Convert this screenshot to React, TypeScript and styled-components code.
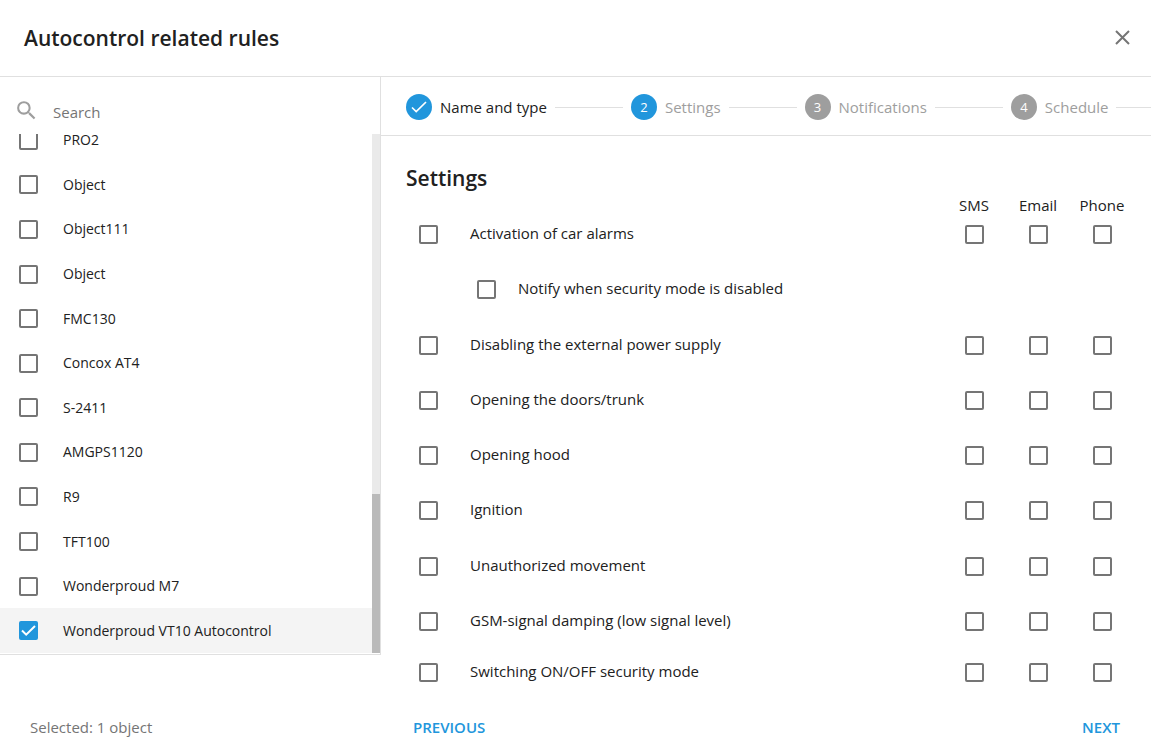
import React, { useState } from "react";
import styled, { createGlobalStyle } from "styled-components";

const GlobalStyle = createGlobalStyle`
  * { box-sizing: border-box; }
  body {
    margin: 0;
    background: #fff;
    color: #212121;
    font-family: "Open Sans", "Noto Sans", sans-serif;
    font-size: 15px;
    line-height: 20px;
  }
  button, input { font: inherit; color: inherit; }
`;

const Dialog = styled.section`
  display: flex;
  flex-direction: column;
  min-height: 100vh;
`;

const Header = styled.header`
  display: flex;
  align-items: center;
  justify-content: space-between;
  height: 77px;
  padding: 0 16px 0 24px;
  border-bottom: 1px solid #e0e0e0;
`;

const Title = styled.h1`
  margin: 0;
  font-size: 21px;
  line-height: 28px;
  font-weight: 600;
`;

const CloseButton = styled.button`
  display: flex;
  padding: 0;
  border: 0;
  background: none;
  color: #757575;
  cursor: pointer;
`;

const Body = styled.div`
  display: flex;
  flex: 1;
`;

const Sidebar = styled.aside`
  display: flex;
  flex-direction: column;
  flex: 0 0 381px;
`;

const SidebarPanel = styled.div`
  border-right: 1px solid #e0e0e0;
  border-bottom: 1px solid #e0e0e0;
  padding-bottom: 1px;
`;

const SearchBar = styled.label`
  display: flex;
  align-items: center;
  gap: 14px;
  height: 57px;
  padding: 10px 14px 0;
  color: #9e9e9e;
`;

const SearchInput = styled.input`
  flex: 1;
  min-width: 0;
  padding: 2px 0 0;
  border: 0;
  outline: 0;
  background: none;
  color: #212121;
  &::placeholder { color: #757575; opacity: 1; }
`;

const ListViewport = styled.div`
  display: flex;
  align-items: flex-end;
  height: 519px;
  overflow: hidden;
`;

const ObjectList = styled.ul`
  flex: 1;
  display: grid;
  grid-template-rows: repeat(12, 1fr);
  height: 535px;
  margin: 0;
  padding: 0;
  list-style: none;
`;

const ObjectItem = styled.li<{ $selected: boolean }>`
  background: ${(p) => (p.$selected ? "#f4f4f4" : "transparent")};
`;

const ObjectLabel = styled.label`
  display: flex;
  align-items: center;
  gap: 25px;
  height: 100%;
  padding-left: 19px;
  font-size: 14px;
  cursor: pointer;
`;

const ScrollTrack = styled.div`
  display: flex;
  align-items: flex-end;
  width: 8px;
  height: 100%;
  background: #eaeaea;
`;

const ScrollThumb = styled.div`
  width: 100%;
  height: 159px;
  background: #bababa;
`;

const Tick = styled.input.attrs({ type: "checkbox" })`
  appearance: none;
  flex: none;
  display: block;
  width: 19px;
  height: 19px;
  margin: 0;
  border: 2px solid #757575;
  border-radius: 2px;
  cursor: pointer;
  &:checked {
    border-color: #2196dc;
    background: #2196dc
      url("data:image/svg+xml,%3Csvg xmlns='http://www.w3.org/2000/svg' viewBox='0 0 15 15'%3E%3Cpath d='M1 7.5l4.2 4.2L14 3' fill='none' stroke='white' stroke-width='2'/%3E%3C/svg%3E")
      center / 15px 15px no-repeat;
  }
`;

const Selected = styled.p`
  margin: 0;
  padding: 62px 30px 0;
  color: #757575;
`;

const Main = styled.main`
  display: flex;
  flex-direction: column;
  flex: 1;
  min-width: 0;
`;

const Stepper = styled.ol`
  display: flex;
  align-items: center;
  height: 59px;
  margin: 0;
  padding: 2px 0 0 25px;
  border-bottom: 1px solid #e0e0e0;
  list-style: none;
  overflow: hidden;
`;

const Step = styled.li<{ $done?: boolean }>`
  display: flex;
  align-items: center;
  flex: none;
  gap: 8px;
  margin-right: 8px;
  color: ${(p) => (p.$done ? "#212121" : "#9e9e9e")};
  &::after {
    content: "";
    width: 68px;
    height: 1px;
    background: #e0e0e0;
  }
`;

const StepBadge = styled.span<{ $active?: boolean }>`
  display: flex;
  align-items: center;
  justify-content: center;
  width: 26px;
  height: 26px;
  border-radius: 50%;
  background: ${(p) => (p.$active ? "#2196dc" : "#9e9e9e")};
  color: #fff;
  font-size: 13px;
`;

const Content = styled.div`
  padding: 28px 17px 0 25px;
`;

const Heading = styled.h2`
  margin: 0;
  font-size: 21px;
  line-height: 28px;
  font-weight: 600;
`;

const RulesTable = styled.table`
  display: block;
  margin-top: 3px;
`;

const TableHead = styled.thead`
  display: block;
`;

const TableBody = styled.tbody`
  display: grid;
  grid-template-rows: repeat(7, 1fr) 51px 24px;
  height: 462px;
`;

const Row = styled.tr`
  display: grid;
  grid-template-columns: 64px 1fr repeat(3, 64px);
  align-items: start;
`;

const HeadCell = styled.th`
  padding: 0 0 8px;
  font-weight: 400;
  text-align: center;
`;

const TickCell = styled.td<{ $first?: boolean }>`
  display: flex;
  justify-content: ${(p) => (p.$first ? "flex-start" : "center")};
  padding: ${(p) => (p.$first ? "2px 0 0 13px" : "2px 0 0")};
`;

const NameCell = styled.td`
  padding: 0;
`;

const NestedCell = styled.td`
  grid-column: 2 / -1;
  padding: 0;
`;

const NestedLabel = styled.label`
  display: flex;
  gap: 22px;
  padding-left: 7px;
  ${Tick} { margin-top: 2px; }
`;

const Footer = styled.footer`
  display: flex;
  justify-content: space-between;
  padding: 32px 31px 18px 32px;
`;

const TextButton = styled.button`
  padding: 0;
  border: 0;
  background: none;
  color: #2196dc;
  font-weight: 600;
  cursor: pointer;
`;

const objects = [
  "PRO2", "Object", "Object111", "Object", "FMC130", "Concox AT4", "S-2411",
  "AMGPS1120", "R9", "TFT100", "Wonderproud M7", "Wonderproud VT10 Autocontrol",
];

const channels = ["SMS", "Email", "Phone"];

const rules: { name: string; nested?: boolean }[] = [
  { name: "Activation of car alarms" },
  { name: "Notify when security mode is disabled", nested: true },
  { name: "Disabling the external power supply" },
  { name: "Opening the doors/trunk" },
  { name: "Opening hood" },
  { name: "Ignition" },
  { name: "Unauthorized movement" },
  { name: "GSM-signal damping (low signal level)" },
  { name: "Switching ON/OFF security mode" },
];

const steps = ["Name and type", "Settings", "Notifications", "Schedule"];

export default function App() {
  const [selected, setSelected] = useState<number[]>([11]);
  const toggle = (i: number) =>
    setSelected((s) => (s.includes(i) ? s.filter((x) => x !== i) : [...s, i]));

  return (
    <>
      <GlobalStyle />
      <Dialog>
        <Header>
          <Title>Autocontrol related rules</Title>
          <CloseButton aria-label="Close">
            <svg width="25" height="24" viewBox="0 0 25 24" fill="none" stroke="currentColor" strokeWidth="2">
              <path d="M6 5l13 13M19 5L6 18" />
            </svg>
          </CloseButton>
        </Header>
        <Body>
          <Sidebar>
            <SidebarPanel>
              <SearchBar>
                <svg width="25" height="25" viewBox="0 0 24 24" fill="currentColor" aria-hidden="true">
                  <path d="M15.5 14h-.79l-.28-.27A6.47 6.47 0 0 0 16 9.5 6.5 6.5 0 1 0 9.5 16c1.61 0 3.09-.59 4.23-1.57l.27.28v.79l5 4.99L20.49 19l-4.99-5zm-6 0C7.01 14 5 11.99 5 9.5S7.01 5 9.5 5 14 7.01 14 9.5 11.99 14 9.5 14z" />
                </svg>
                <SearchInput type="text" placeholder="Search" aria-label="Search" />
              </SearchBar>
              <ListViewport>
                <ObjectList>
                  {objects.map((name, i) => (
                    <ObjectItem key={i} $selected={selected.includes(i)}>
                      <ObjectLabel>
                        <Tick checked={selected.includes(i)} onChange={() => toggle(i)} />
                        {name}
                      </ObjectLabel>
                    </ObjectItem>
                  ))}
                </ObjectList>
                <ScrollTrack>
                  <ScrollThumb />
                </ScrollTrack>
              </ListViewport>
            </SidebarPanel>
            <Selected>
              Selected: {selected.length} {selected.length === 1 ? "object" : "objects"}
            </Selected>
          </Sidebar>
          <Main>
            <Stepper>
              {steps.map((step, i) => (
                <Step key={step} $done={i === 0}>
                  <StepBadge $active={i < 2}>
                    {i === 0 ? (
                      <svg width="18" height="18" viewBox="0 0 18 18" fill="none" stroke="#fff" strokeWidth="1.7" aria-label="Done">
                        <path d="M2 9.5l4.2 4L16 4" />
                      </svg>
                    ) : (
                      i + 1
                    )}
                  </StepBadge>
                  {step}
                </Step>
              ))}
            </Stepper>
            <Content>
              <Heading>Settings</Heading>
              <RulesTable>
                <TableHead>
                  <Row>
                    <td />
                    <td />
                    {channels.map((c) => (
                      <HeadCell key={c} scope="col">{c}</HeadCell>
                    ))}
                  </Row>
                </TableHead>
                <TableBody>
                  {rules.map((rule, i) =>
                    rule.nested ? (
                      <Row key={i}>
                        <td />
                        <NestedCell>
                          <NestedLabel>
                            <Tick />
                            {rule.name}
                          </NestedLabel>
                        </NestedCell>
                      </Row>
                    ) : (
                      <Row key={i}>
                        <TickCell $first>
                          <Tick id={`rule-${i}`} />
                        </TickCell>
                        <NameCell>
                          <label htmlFor={`rule-${i}`}>{rule.name}</label>
                        </NameCell>
                        {channels.map((c) => (
                          <TickCell key={c}>
                            <Tick aria-label={`${rule.name}: ${c}`} />
                          </TickCell>
                        ))}
                      </Row>
                    )
                  )}
                </TableBody>
              </RulesTable>
            </Content>
            <Footer>
              <TextButton>PREVIOUS</TextButton>
              <TextButton>NEXT</TextButton>
            </Footer>
          </Main>
        </Body>
      </Dialog>
    </>
  );
}
